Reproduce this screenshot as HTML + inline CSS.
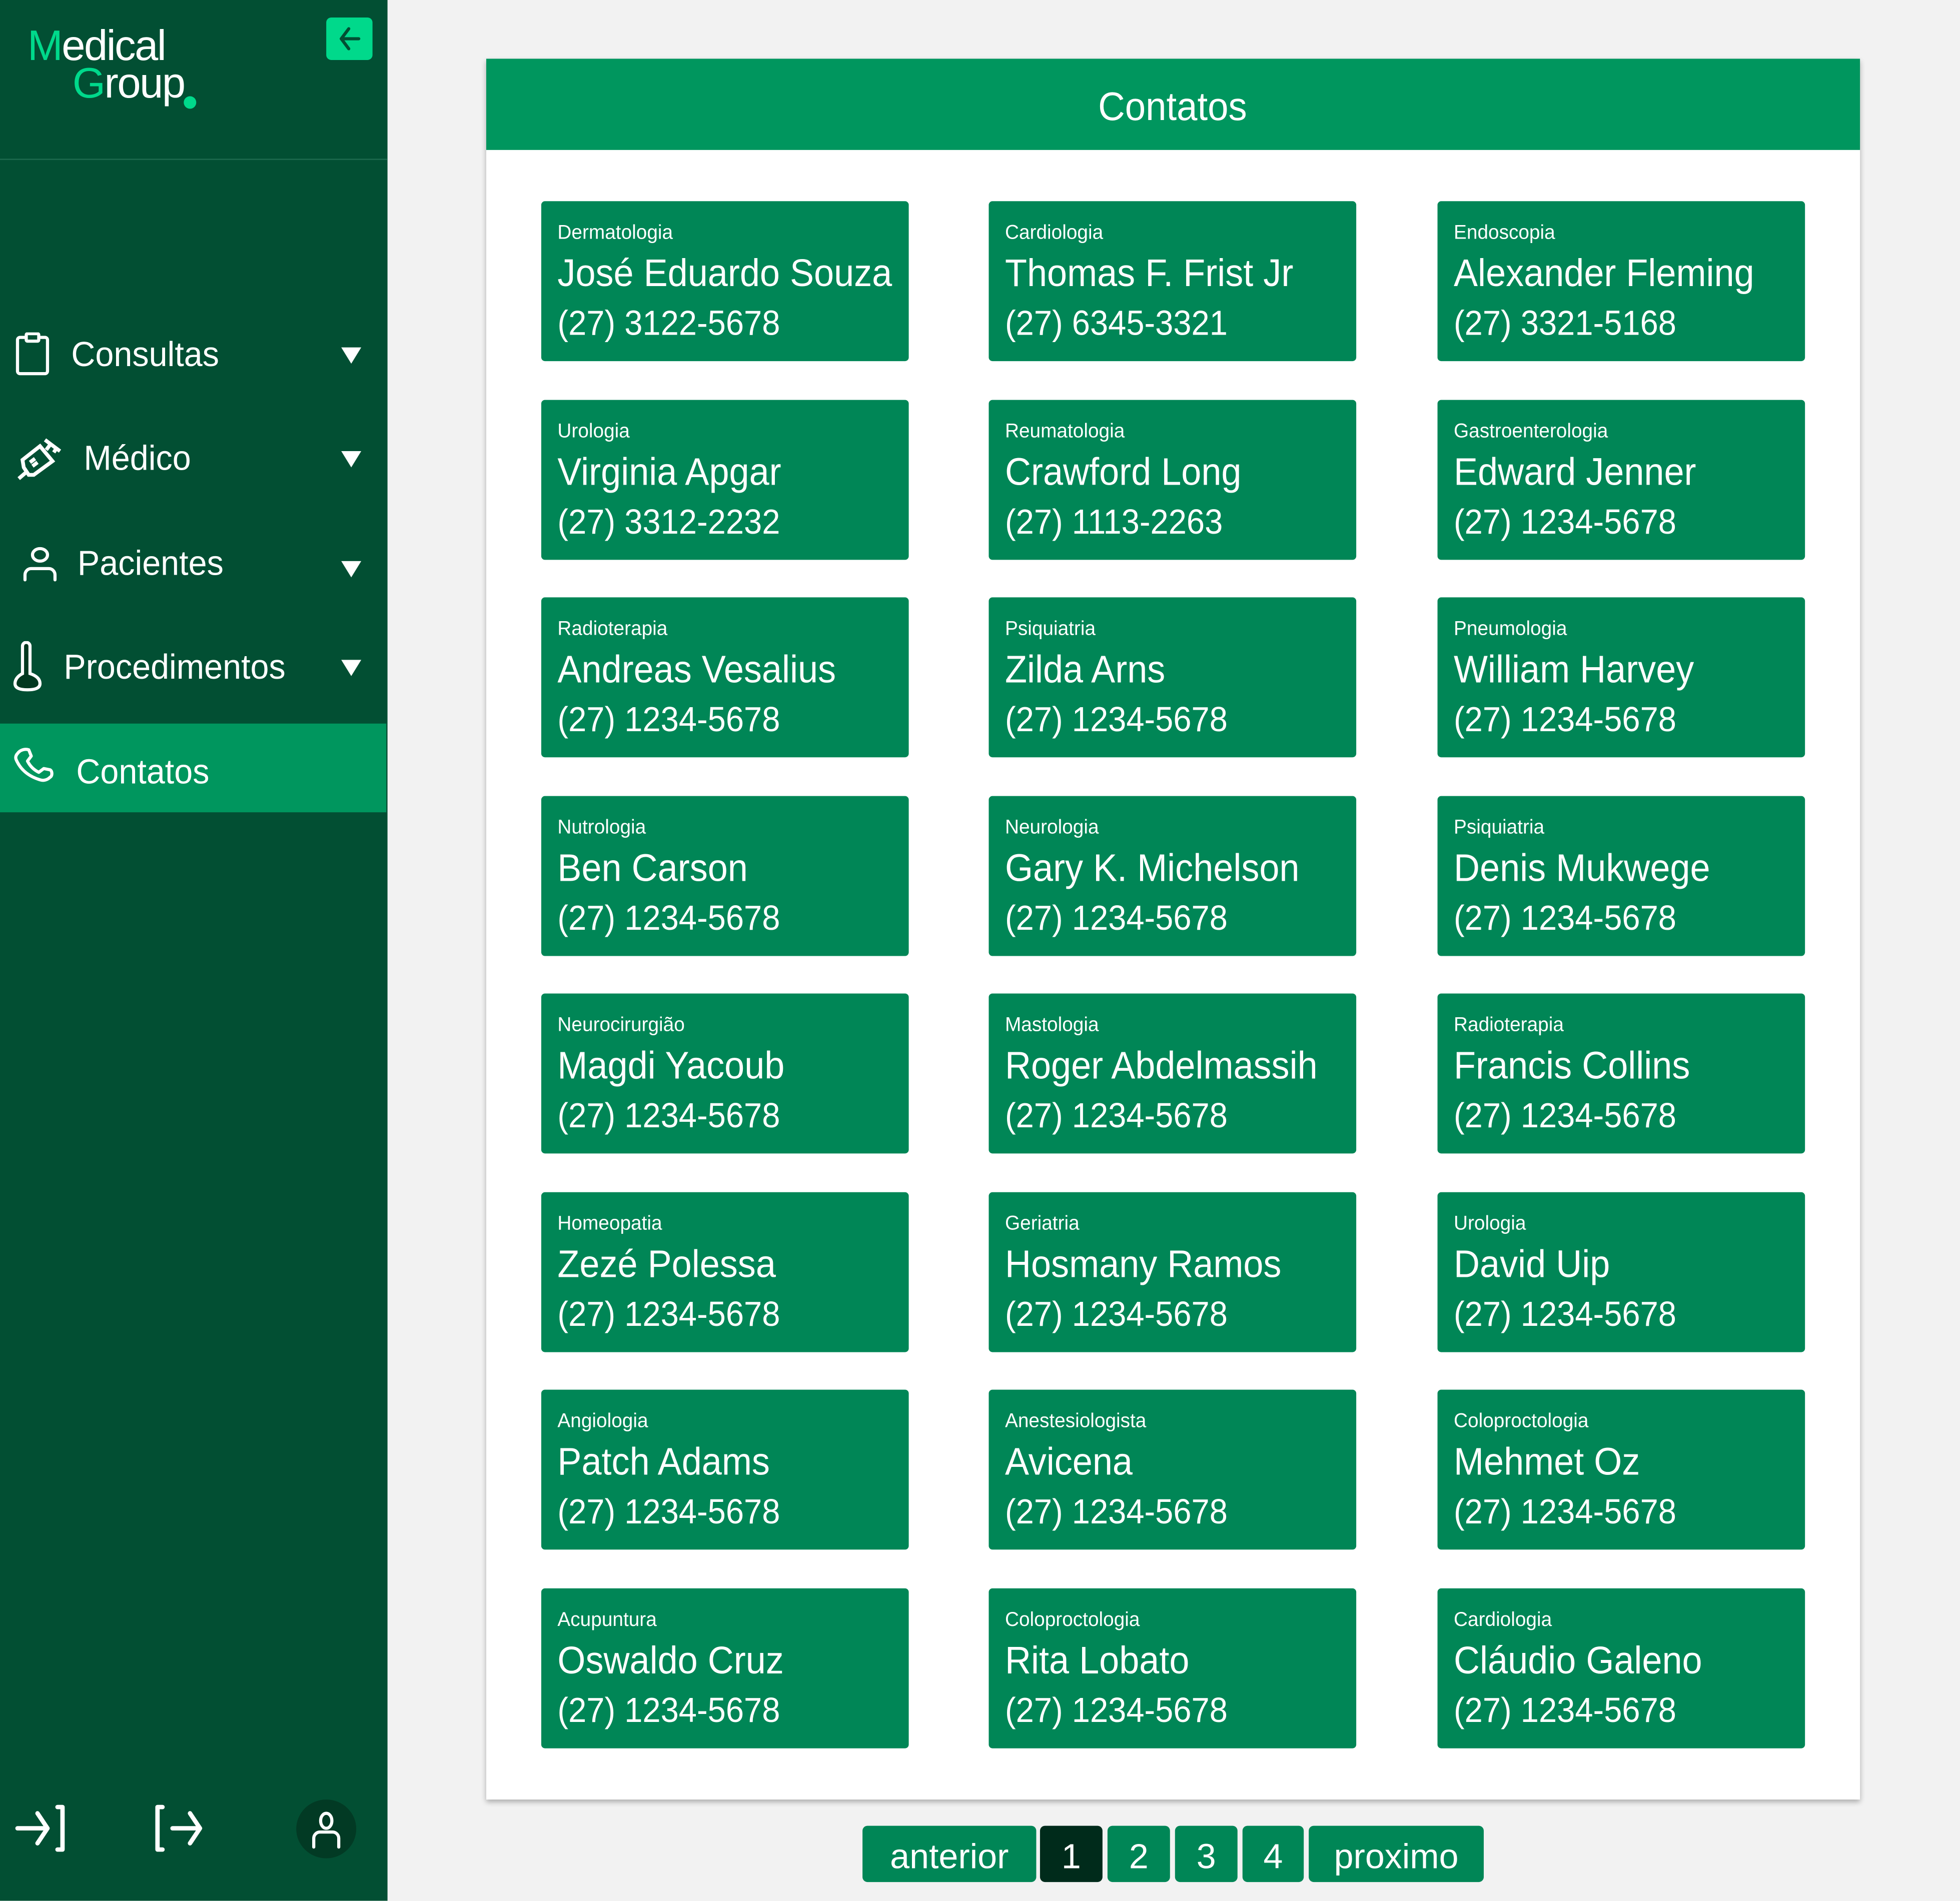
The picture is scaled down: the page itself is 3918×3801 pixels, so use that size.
<!DOCTYPE html>
<html><head><meta charset="utf-8"><style>
*{margin:0;padding:0;box-sizing:border-box}
html,body{width:3918px;height:3801px;overflow:hidden;background:#f2f2f2}
#w{position:absolute;left:0;top:0;width:1568px;height:1521px;transform:scale(2.49872);transform-origin:0 0;font-family:"Liberation Sans",sans-serif;color:#fff}
.sb{position:absolute;left:0;top:0;width:310px;height:1521px;background:#024f33}
.logo{position:absolute;left:22px;top:22px;font-size:34px;line-height:30px;letter-spacing:-1px}
.g{color:#00d98b}
.back{position:absolute;left:261px;top:14px;width:37px;height:34px;background:#00d98b;border-radius:4px}
.div{position:absolute;left:0;top:127px;width:310px;height:1px;background:#1d6a4e}
.mi{position:absolute;left:0;width:310px;height:70px;font-size:28px;display:flex;align-items:center}
.mi svg{position:absolute}
.mi span{position:absolute;transform:scaleX(.95);transform-origin:0 50%}
.tri{position:absolute;left:273px;width:0;height:0;border-left:8px solid transparent;border-right:8px solid transparent;border-top:13px solid #fff}
.panel{position:absolute;left:389px;top:47px;width:1099px;height:1393px;background:#fff;box-shadow:0 2px 4px rgba(0,0,0,.3)}
.hd{position:absolute;left:0;top:0;width:1099px;height:73px;background:#00965e;font-size:32px;text-align:center;line-height:76px}
.hd span{display:inline-block;transform:scaleX(.93)}
.c{position:absolute;width:294px;height:128px;background:#008656;border-radius:3px}
.c div{position:absolute;left:13px;white-space:nowrap;transform-origin:0 50%}
.c .s{top:17px;font-size:16px;transform:scaleX(.97)}
.c .n{top:40px;font-size:31px;transform:scaleX(.93)}
.c .p{top:82px;font-size:28px;transform:scaleX(.93)}
.pg{position:absolute;top:1461px;height:45px;background:#008656;border-radius:4px;font-size:28px;text-align:center;line-height:50px}
</style></head><body><div id="w">
<div class="sb">
<div class="logo"><span class="g">M</span>edical<br><span style="padding-left:36px"><span class="g">G</span>roup</span></div>
<div style="position:absolute;left:147px;top:77px;width:10px;height:10px;border-radius:50%;background:#00d98b"></div>
<div class="back"><svg width="37" height="34" viewBox="0 0 37 34"><path d="M26 17H12M18 9l-6 8 6 8" stroke="#024f33" stroke-width="2.5" fill="none" stroke-linecap="round" stroke-linejoin="round"/></svg></div>
<div class="div"></div>
<div class="mi" style="top:249px"><svg style="left:12px" width="28" height="36" viewBox="0 0 28 36"><rect x="2" y="4" width="24" height="29" rx="2" fill="none" stroke="#fff" stroke-width="2.5"/><rect x="9" y="1" width="10" height="6" rx="1" fill="#024f33" stroke="#fff" stroke-width="2.5"/></svg><span style="left:57px">Consultas</span><div class="tri" style="top:29px"></div></div>
<div class="mi" style="top:332px"><svg style="left:12px" width="38" height="38" viewBox="0 0 38 38"><g stroke="#fff" stroke-width="3" fill="none"><path d="M3 35l7-6M7 26l4 6 4 0 15-11-10-12-14 11z"/><path d="M24 4l12 9M28 8l-3 4M33 11l-2 3M12 22l4-3M14 25l4-3"/></g></svg><span style="left:67px">Médico</span><div class="tri" style="top:29px"></div></div>
<div class="mi" style="top:416px"><svg style="left:16px" width="32" height="32" viewBox="0 0 32 32"><ellipse cx="16" cy="9" rx="6" ry="5" fill="none" stroke="#fff" stroke-width="2.5"/><path d="M4 29v-4a5 5 0 015-5h14a5 5 0 015 5v4" fill="none" stroke="#fff" stroke-width="2.5" stroke-linecap="round"/></svg><span style="left:62px">Pacientes</span><div class="tri" style="top:33px"></div></div>
<div class="mi" style="top:499px"><svg style="left:10px" width="26" height="42" viewBox="0 0 26 42"><path d="M8 4a3 3 0 016 0v22c6 2 8 5 8 8 0 4-5 5-10 5S2 38 2 34c0-3 2-6 6-8z" fill="#02381f" stroke="#fff" stroke-width="2.5"/></svg><span style="left:51px">Procedimentos</span><div class="tri" style="top:29px"></div></div>
<div class="mi" style="top:579px;height:71px;background:#00965e;width:309px"><svg style="left:10px" width="36" height="36" viewBox="0 0 36 36"><path d="M4 6c2-3 6-4 9-3l2 5-3 4c2 4 5 7 9 9l4-3 5 1c2 1 2 5 0 6-2 2-5 3-8 2C12 24 6 18 3 11c-1-2 0-4 1-5z" fill="none" stroke="#fff" stroke-width="2.5" stroke-linejoin="round"/></svg><span style="left:61px;top:23px">Contatos</span></div>
<svg style="position:absolute;left:12px;top:1443px" width="40" height="40" viewBox="0 0 40 40"><g stroke="#fff" stroke-width="3.5" fill="none" stroke-linecap="round" stroke-linejoin="round"><path d="M2 20h24M18 8l8 12-8 12M34 3h4v34h-4"/></g></svg>
<svg style="position:absolute;left:122px;top:1443px" width="42" height="40" viewBox="0 0 42 40"><g stroke="#fff" stroke-width="3.5" fill="none" stroke-linecap="round" stroke-linejoin="round"><path d="M8 3H4v34h4M16 20h22M30 8l8 12-8 12"/></g></svg>
<div style="position:absolute;left:237px;top:1440px;width:48px;height:47px;border-radius:50%;background:#023a24"></div>
<svg style="position:absolute;left:246px;top:1448px" width="30" height="32" viewBox="0 0 30 32"><ellipse cx="15" cy="9" rx="4.5" ry="6" fill="none" stroke="#fff" stroke-width="2.5"/><path d="M5 30v-7a5 5 0 015-5h10a5 5 0 015 5v7" fill="none" stroke="#fff" stroke-width="2.5" stroke-linecap="round"/></svg>
</div>
<div class="panel"><div class="hd"><span>Contatos</span></div></div>
<div class="pg" style="left:690px;width:139px">anterior</div>
<div class="pg" style="left:832px;width:50px;background:#002b1b">1</div>
<div class="pg" style="left:886px;width:50px">2</div>
<div class="pg" style="left:940px;width:50px">3</div>
<div class="pg" style="left:994px;width:49px">4</div>
<div class="pg" style="left:1047px;width:140px">proximo</div>

<div class="c" style="left:433px;top:161px"><div class="s">Dermatologia</div><div class="n">José Eduardo Souza</div><div class="p">(27) 3122-5678</div></div>
<div class="c" style="left:791px;top:161px"><div class="s">Cardiologia</div><div class="n">Thomas F. Frist Jr</div><div class="p">(27) 6345-3321</div></div>
<div class="c" style="left:1150px;top:161px"><div class="s">Endoscopia</div><div class="n">Alexander Fleming</div><div class="p">(27) 3321-5168</div></div>
<div class="c" style="left:433px;top:320px"><div class="s">Urologia</div><div class="n">Virginia Apgar</div><div class="p">(27) 3312-2232</div></div>
<div class="c" style="left:791px;top:320px"><div class="s">Reumatologia</div><div class="n">Crawford Long</div><div class="p">(27) 1113-2263</div></div>
<div class="c" style="left:1150px;top:320px"><div class="s">Gastroenterologia</div><div class="n">Edward Jenner</div><div class="p">(27) 1234-5678</div></div>
<div class="c" style="left:433px;top:478px"><div class="s">Radioterapia</div><div class="n">Andreas Vesalius</div><div class="p">(27) 1234-5678</div></div>
<div class="c" style="left:791px;top:478px"><div class="s">Psiquiatria</div><div class="n">Zilda Arns</div><div class="p">(27) 1234-5678</div></div>
<div class="c" style="left:1150px;top:478px"><div class="s">Pneumologia</div><div class="n">William Harvey</div><div class="p">(27) 1234-5678</div></div>
<div class="c" style="left:433px;top:637px"><div class="s">Nutrologia</div><div class="n">Ben Carson</div><div class="p">(27) 1234-5678</div></div>
<div class="c" style="left:791px;top:637px"><div class="s">Neurologia</div><div class="n">Gary K. Michelson</div><div class="p">(27) 1234-5678</div></div>
<div class="c" style="left:1150px;top:637px"><div class="s">Psiquiatria</div><div class="n">Denis Mukwege</div><div class="p">(27) 1234-5678</div></div>
<div class="c" style="left:433px;top:795px"><div class="s">Neurocirurgião</div><div class="n">Magdi Yacoub</div><div class="p">(27) 1234-5678</div></div>
<div class="c" style="left:791px;top:795px"><div class="s">Mastologia</div><div class="n">Roger Abdelmassih</div><div class="p">(27) 1234-5678</div></div>
<div class="c" style="left:1150px;top:795px"><div class="s">Radioterapia</div><div class="n">Francis Collins</div><div class="p">(27) 1234-5678</div></div>
<div class="c" style="left:433px;top:954px"><div class="s">Homeopatia</div><div class="n">Zezé Polessa</div><div class="p">(27) 1234-5678</div></div>
<div class="c" style="left:791px;top:954px"><div class="s">Geriatria</div><div class="n">Hosmany Ramos</div><div class="p">(27) 1234-5678</div></div>
<div class="c" style="left:1150px;top:954px"><div class="s">Urologia</div><div class="n">David Uip</div><div class="p">(27) 1234-5678</div></div>
<div class="c" style="left:433px;top:1112px"><div class="s">Angiologia</div><div class="n">Patch Adams</div><div class="p">(27) 1234-5678</div></div>
<div class="c" style="left:791px;top:1112px"><div class="s">Anestesiologista</div><div class="n">Avicena</div><div class="p">(27) 1234-5678</div></div>
<div class="c" style="left:1150px;top:1112px"><div class="s">Coloproctologia</div><div class="n">Mehmet Oz</div><div class="p">(27) 1234-5678</div></div>
<div class="c" style="left:433px;top:1271px"><div class="s">Acupuntura</div><div class="n">Oswaldo Cruz</div><div class="p">(27) 1234-5678</div></div>
<div class="c" style="left:791px;top:1271px"><div class="s">Coloproctologia</div><div class="n">Rita Lobato</div><div class="p">(27) 1234-5678</div></div>
<div class="c" style="left:1150px;top:1271px"><div class="s">Cardiologia</div><div class="n">Cláudio Galeno</div><div class="p">(27) 1234-5678</div></div>
</div></body></html>
